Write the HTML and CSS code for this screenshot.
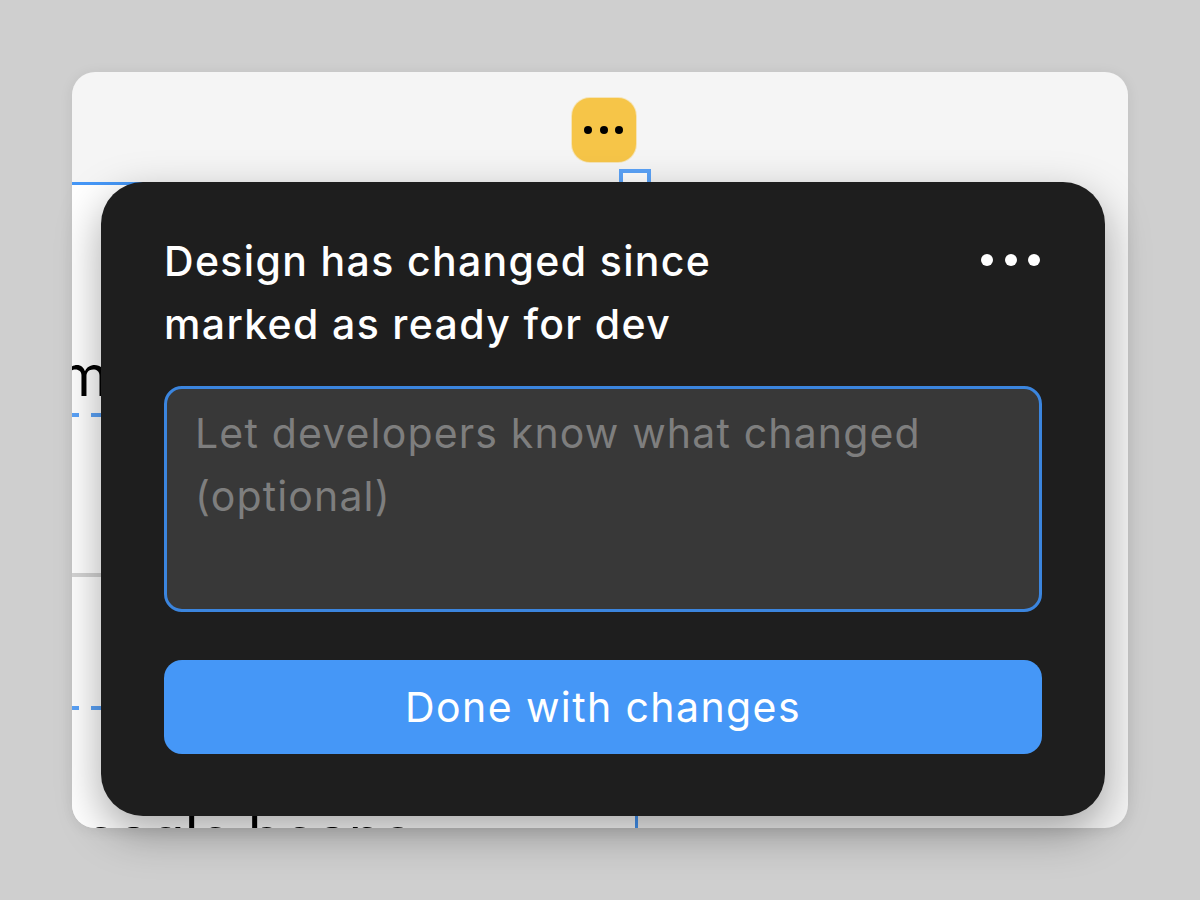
FILE: index.html
```html
<!DOCTYPE html>
<html lang="en">
<head>
<meta charset="utf-8">
<title>Design has changed</title>
<link rel="stylesheet" href="styles.css">
</head>
<body>
<main class="card">
  <div class="badge" aria-hidden="true"><span></span><span></span><span></span></div>
  <div class="canvas">
    <div class="big-text m-text">m</div>
    <div class="dash dash-1"></div>
    <div class="rule"></div>
    <div class="dash dash-2"></div>
    <div class="big-text bottom-text">eagle beans</div>
  </div>
  <div class="handle"></div>
  <section class="popover">
    <header class="pop-head">
      <h1 class="pop-title">Design has changed since<br>marked as ready for dev</h1>
      <div class="more" aria-hidden="true"><span></span><span></span><span></span></div>
    </header>
    <div class="field">Let developers know what changed (optional)</div>
    <button class="done">Done with changes</button>
  </section>
</main>
</body>
</html>
```

FILE: styles.css
```css
* { box-sizing: border-box; }
html, body { margin: 0; height: 100%; }
body {
  width: 1200px;
  height: 900px;
  background: #cfcfcf;
  padding: 72px;
  font-family: Inter, "Liberation Sans", sans-serif;
  overflow: hidden;
}
.card {
  position: relative;
  width: 1056px;
  height: 756px;
  background: #f5f5f5;
  border-radius: 23px;
  box-shadow: 0 2px 14px rgba(0,0,0,.08);
}
.canvas {
  position: absolute;
  left: 0; top: 109.5px; bottom: 0;
  width: 566px;
  background: #fff;
  border-top: 3.5px solid #4597f7;
  border-right: 3.5px solid #4597f7;
  overflow: hidden;
  border-bottom-left-radius: 23px;
}
.badge {
  position: absolute;
  left: 500px; top: 26px;
  width: 63.5px; height: 63.5px;
  background: #f6c548;
  border-radius: 18px;
  display: flex;
  align-items: center;
  justify-content: center;
  gap: 7.5px;
  box-shadow: 0 0 0 1px rgba(247,197,72,.35);
}
.badge span {
  width: 8px; height: 8px;
  border-radius: 50%;
  background: #000;
}
.handle {
  position: absolute;
  left: 547px; top: 97px;
  width: 32px; height: 32px;
  background: #fff;
  border: 4px solid #5ba3f8;
}
.big-text {
  position: absolute;
  font-size: 57px;
  line-height: 1;
  color: #000;
  font-weight: 400;
  white-space: nowrap;
}
.m-text { left: -13px; top: 162px; }
.bottom-text { left: 12px; top: 624px; }
.dash {
  position: absolute;
  left: -3px; right: 0;
  height: 4px;
  background: repeating-linear-gradient(90deg, #5ba3f8 0 10px, transparent 10px 22px);
}
.dash-1 { top: 228px; }
.dash-2 { top: 521px; }
.rule {
  position: absolute;
  left: 0; right: 0; top: 388px;
  height: 4px;
  background: #d4d4d4;
}
.popover {
  position: absolute;
  left: 29px; top: 110px;
  width: 1004px; height: 634px;
  background: #1e1e1e;
  border-radius: 42px;
  padding: 48px 63px 0;
  display: flex;
  flex-direction: column;
  box-shadow: 0 16px 44px rgba(0,0,0,.34);
}
.pop-head {
  display: flex;
  justify-content: space-between;
  align-items: flex-start;
  height: 128px;
}
.pop-title {
  margin: 0;
  font-size: 41px;
  line-height: 63px;
  letter-spacing: 1.35px;
  font-weight: 500;
  color: #fff;
}
.more {
  display: flex;
  gap: 11.5px;
  margin-top: 24px;
  margin-right: 2px;
}
.more span {
  width: 12px; height: 12px;
  border-radius: 50%;
  background: #fff;
}
.field {
  margin-top: 28px;
  height: 226px;
  border: 3px solid #3b85de;
  border-radius: 18px;
  background: #383838;
  padding: 13px 28px;
  color: #7e7e7e;
  font-size: 41px;
  line-height: 63px;
  letter-spacing: 1.15px;
}
.done {
  margin-top: 48px;
  height: 94px;
  border: 0;
  border-radius: 18px;
  background: #4597f7;
  color: #fff;
  font: 400 41px/1 Inter, "Liberation Sans", sans-serif;
  letter-spacing: 1.4px;
}
```
